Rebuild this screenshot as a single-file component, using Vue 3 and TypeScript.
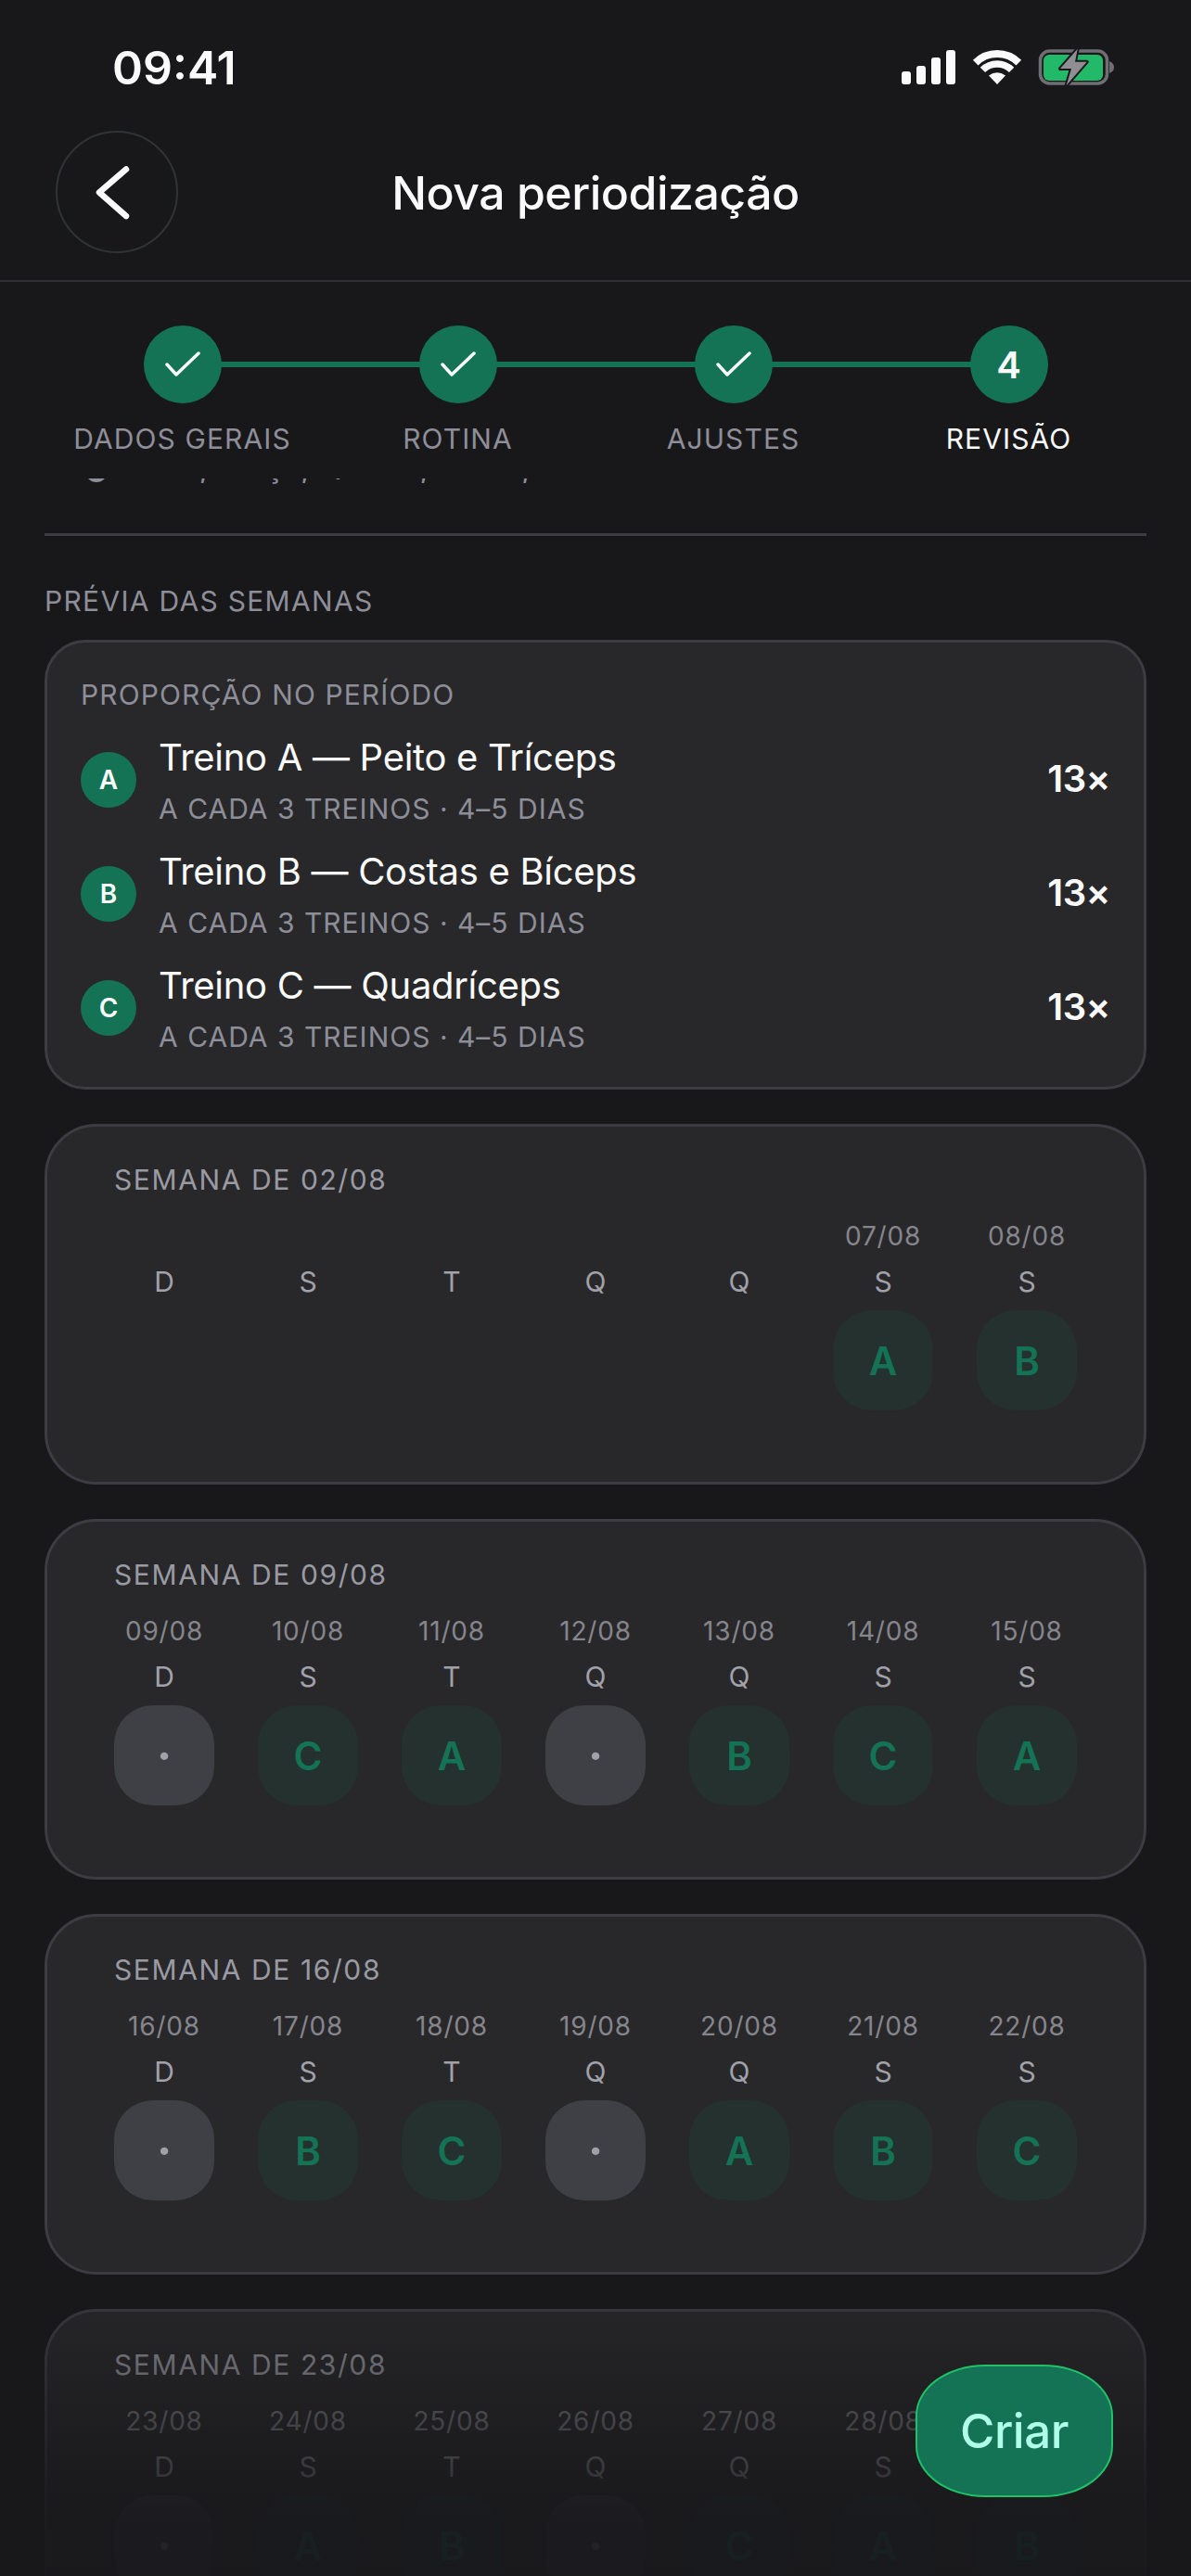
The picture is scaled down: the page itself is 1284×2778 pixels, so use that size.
<script setup lang="ts">
interface Day {
  date: string
  label: string
  slot: string
}

interface Week {
  title: string
  days: Day[]
}

const steps = [
  { label: 'DADOS GERAIS', done: true },
  { label: 'ROTINA', done: true },
  { label: 'AJUSTES', done: true },
  { label: 'REVISÃO', done: false },
]

const workouts = [
  { key: 'A', name: 'Treino A — Peito e Tríceps' },
  { key: 'B', name: 'Treino B — Costas e Bíceps' },
  { key: 'C', name: 'Treino C — Quadríceps' },
]

const letters = ['D', 'S', 'T', 'Q', 'Q', 'S', 'S']

function makeWeek(start: number, slots: string[], hiddenDates = 0): Week {
  const fmt = (n: number) => String(n).padStart(2, '0') + '/08'
  return {
    title: 'SEMANA DE ' + fmt(start),
    days: slots.map((slot, i) => ({
      date: i < hiddenDates ? '' : fmt(start + i),
      label: letters[i],
      slot,
    })),
  }
}

const weeks: Week[] = [
  { title: 'SEMANA DE 02/08', days: makeWeek(2, ['', '', '', '', '', 'A', 'B'], 5).days },
  makeWeek(9, ['·', 'C', 'A', '·', 'B', 'C', 'A']),
  makeWeek(16, ['·', 'B', 'C', '·', 'A', 'B', 'C']),
  makeWeek(23, ['·', 'A', 'B', '·', 'C', 'A', 'B']),
]
</script>

<template>
  <div class="screen">
    <!-- status bar -->
    <div class="status">
      <span class="time">09:41</span>
      <svg class="status-icons" width="230" height="41" viewBox="973 52 230 41">
        <rect x="973" y="77" width="10" height="14" rx="3" fill="#fafafa" />
        <rect x="989" y="71" width="10" height="20" rx="3" fill="#fafafa" />
        <rect x="1005" y="62" width="10" height="29" rx="3" fill="#fafafa" />
        <rect x="1021" y="54" width="10" height="37" rx="3" fill="#fafafa" />
        <path d="M1052.7 67.7A33 33 0 0 1 1099.3 67.7" fill="none" stroke="#fafafa" stroke-width="8" />
        <path d="M1060.4 75.4A22 22 0 0 1 1091.6 75.4" fill="none" stroke="#fafafa" stroke-width="7.5" />
        <path d="M1076 91L1067 81.5Q1076 75 1085 81.5Z" fill="#fafafa" />
        <rect x="1122.5" y="55" width="72" height="35" rx="10" fill="none" stroke="#6e6e73" stroke-width="3.5" />
        <rect x="1126" y="59" width="64" height="28" rx="6" fill="#22b968" />
        <path d="M1197 66Q1202 68 1202 72.500Q1202 77 1197 79Z" fill="#6e6e73" />
        <path d="M1162.700 52.700L1144 74H1156L1150.700 92L1172.700 66.700H1160Z" fill="#8e8e93" stroke="#18181b" stroke-width="4" stroke-linejoin="round" paint-order="stroke" />
      </svg>
    </div>

    <!-- header -->
    <header class="topbar">
      <button class="back" aria-label="Voltar">
        <svg width="40" height="62" viewBox="0 0 40 62">
          <path d="M34 6.500L5 31.500L34 57" fill="none" stroke="#fafafa" stroke-width="6.500" stroke-linecap="round" stroke-linejoin="round" />
        </svg>
      </button>
      <h1 class="title">Nova periodização</h1>
    </header>

    <!-- stepper -->
    <div class="stepper">
      <div v-for="(step, i) in steps" :key="step.label" class="step" :class="{ last: i === steps.length - 1 }">
        <div class="step-dot">
          <svg v-if="step.done" width="38" height="28" viewBox="0 0 38 28">
            <path d="M2 14L12 25L36 2" fill="none" stroke="#fafafa" stroke-width="3.500" stroke-linecap="round" stroke-linejoin="round" />
          </svg>
          <span v-else class="step-num">{{ i + 1 }}</span>
        </div>
        <span class="step-label" :class="{ current: !step.done }">{{ step.label }}</span>
      </div>
    </div>

    <!-- conteudo rolavel -->
    <main class="content">
      <div class="clipped-row">
        <span class="clipped-dot"></span>
        <span>Dom, Terça, Quarta, Sexta, Sábado</span>
      </div>
      <div class="divider"></div>

      <div class="section-label">PRÉVIA DAS SEMANAS</div>

      <section class="card summary">
        <div class="summary-title">PROPORÇÃO NO PERÍODO</div>
        <div class="summary-list">
          <div v-for="w in workouts" :key="w.key" class="summary-row">
            <span class="badge">{{ w.key }}</span>
            <div class="summary-text">
              <span class="summary-name">{{ w.name }}</span>
              <span class="summary-sub">A CADA 3 TREINOS · 4–5 DIAS</span>
            </div>
            <span class="summary-count">13×</span>
          </div>
        </div>
      </section>

      <section v-for="week in weeks" :key="week.title" class="card week">
        <div class="week-title">{{ week.title }}</div>
        <div class="week-grid">
          <div v-for="(day, i) in week.days" :key="i" class="day">
            <span class="day-date">{{ day.date }}</span>
            <span class="day-letter">{{ day.label }}</span>
            <span
              class="cell"
              :class="{ rest: day.slot === '·', train: day.slot && day.slot !== '·' }"
            >{{ day.slot }}</span>
          </div>
        </div>
      </section>
    </main>

    <div class="fade"></div>
    <button class="fab">Criar</button>
  </div>
</template>

<style scoped>
.screen {
  position: relative;
  width: 1284px;
  height: 2778px;
  overflow: hidden;
  display: flex;
  flex-direction: column;
  background: #18181b;
  color: #fafafa;
  font-family: Inter, "Noto Sans", sans-serif;
}

.status {
  height: 141px;
  flex: none;
  display: flex;
  align-items: flex-start;
  justify-content: space-between;
  padding: 43px 82px 0 121px;
  box-sizing: border-box;
}

.time {
  font-size: 50px;
  line-height: 60px;
  font-weight: 600;
}

.status-icons {
  margin-top: 9px;
}

.topbar {
  position: relative;
  height: 163px;
  flex: none;
  box-sizing: border-box;
  padding-left: 60px;
  border-bottom: 2px solid #2f2f33;
}

.back {
  width: 132px;
  height: 132px;
  box-sizing: border-box;
  border: 2px solid #303435;
  border-radius: 50%;
  background: transparent;
  display: flex;
  align-items: center;
  justify-content: center;
  padding: 0 8px 0 0;
}

.title {
  position: absolute;
  left: 0;
  right: 0;
  top: 0;
  margin: 0;
  text-align: center;
  font-size: 50px;
  line-height: 134px;
  letter-spacing: -0.5px;
  font-weight: 500;
}

.stepper {
  flex: none;
  display: grid;
  grid-template-columns: repeat(4, 297px);
  padding: 47px 48px 25px;
}

.step {
  position: relative;
  display: flex;
  flex-direction: column;
  align-items: center;
  gap: 20px;
}

.step::after {
  content: "";
  position: absolute;
  left: 50%;
  width: 100%;
  top: 39px;
  height: 6px;
  background: #137354;
}

.step.last::after {
  display: none;
}

.step-dot {
  position: relative;
  z-index: 1;
  width: 84px;
  height: 84px;
  border-radius: 50%;
  background: #137354;
  display: flex;
  align-items: center;
  justify-content: center;
}

.step-num {
  font-size: 40px;
  font-weight: 600;
}

.step-label {
  font-size: 30px;
  line-height: 36px;
  letter-spacing: 1.1px;
  color: #8e8e99;
}

.step-label.current {
  color: #fafafa;
}

.content {
  flex: 1;
  min-height: 0;
  overflow: hidden;
  padding: 0 48px;
}

/* linha anterior, quase toda fora da area de rolagem */
.clipped-row {
  margin-top: -25px;
  height: 24px;
  display: flex;
  align-items: center;
  gap: 24px;
  padding-left: 44px;
  font-size: 34px;
  line-height: 24px;
  color: #8e8e99;
}

.clipped-dot {
  width: 24px;
  height: 24px;
  margin-top: 10px;
  border-radius: 50%;
  background: #8e8e99;
}

.divider {
  margin-top: 60px;
  height: 3px;
  background: #3c3c42;
}

.section-label {
  margin-top: 52px;
  font-size: 30px;
  line-height: 36px;
  letter-spacing: 1.3px;
  color: #8e8e99;
}

.card {
  box-sizing: border-box;
  border: 3px solid #3c3c42;
  background: #28282b;
}

.summary {
  margin-top: 24px;
  padding: 38px 36px 36px;
  border-radius: 44px;
}

.summary-title {
  font-size: 30px;
  line-height: 36px;
  letter-spacing: 1.100px;
  color: #8e8e99;
}

.summary-list {
  margin-top: 24px;
  display: flex;
  flex-direction: column;
  gap: 24px;
}

.summary-row {
  display: flex;
  align-items: center;
  gap: 24px;
}

.badge {
  width: 60px;
  height: 60px;
  flex: none;
  border-radius: 50%;
  background: #137354;
  display: flex;
  align-items: center;
  justify-content: center;
  font-size: 28px;
  font-weight: 600;
}

.summary-text {
  flex: 1;
  display: flex;
  flex-direction: column;
  gap: 11px;
}

.summary-name {
  font-size: 40px;
  line-height: 52px;
  letter-spacing: -0.3px;
}

.summary-sub {
  font-size: 30px;
  line-height: 36px;
  letter-spacing: 1px;
  color: #8e8e99;
}

.summary-count {
  font-size: 40px;
  font-weight: 600;
  letter-spacing: -0.5px;
  padding-bottom: 2px;
}

.week {
  margin-top: 37px;
  height: 389px;
  padding: 39px 72px 0;
  border-radius: 56px;
}

.week-title {
  font-size: 30px;
  line-height: 36px;
  letter-spacing: 1.600px;
  color: #9a9aa3;
}

.week-grid {
  margin-top: 25px;
  display: grid;
  grid-template-columns: repeat(7, 108px);
  column-gap: 47px;
}

.day {
  display: flex;
  flex-direction: column;
  align-items: center;
  gap: 13px;
}

.day-date {
  height: 36px;
  font-size: 28px;
  line-height: 36px;
  letter-spacing: 0.8px;
  white-space: nowrap;
  color: #85858b;
}

.day-letter {
  font-size: 30px;
  line-height: 36px;
  color: #a1a1aa;
}

.cell {
  width: 108px;
  height: 108px;
  border-radius: 42px;
  display: flex;
  align-items: center;
  justify-content: center;
  font-size: 42px;
  font-weight: 600;
}

.cell.train {
  background: #24312e;
  color: #137354;
}

.cell.rest {
  background: #3f3f46;
  color: #a1a1aa;
  font-size: 50px;
  font-weight: 700;
}

.fade {
  position: absolute;
  left: 0;
  right: 0;
  bottom: 0;
  height: 338px;
  background: linear-gradient(to bottom, rgba(24, 24, 27, 0) 0%, rgba(24, 24, 27, 0.36) 30%, rgba(24, 24, 27, 0.56) 47%, rgba(24, 24, 27, 0.76) 65%, rgba(24, 24, 27, 0.9) 80%, rgba(24, 24, 27, 0.93) 100%);
  pointer-events: none;
}

.fab {
  position: absolute;
  left: 987px;
  top: 2550px;
  width: 213px;
  height: 143px;
  box-sizing: border-box;
  border: 2px solid #22c069;
  border-radius: 75px / 55px;
  background: #137354;
  color: #b0ffe8;
  font-family: inherit;
  font-size: 51px;
  font-weight: 500;
  letter-spacing: -0.5px;
  padding: 0;
}
</style>

<style>
html, body {
  background: #18181b;
}
</style>
